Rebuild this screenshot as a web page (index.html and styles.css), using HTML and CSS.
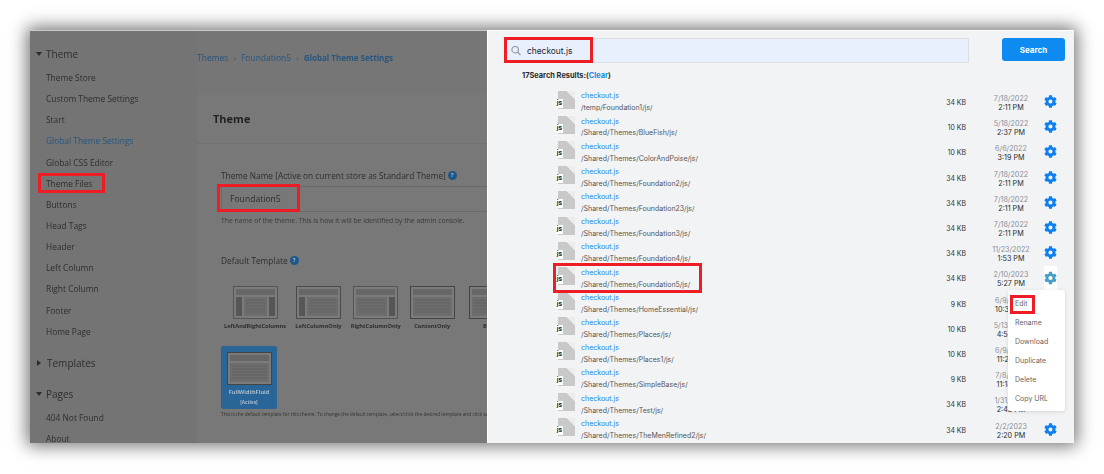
FILE: index.html
```html
<!DOCTYPE html>
<html lang="en">
<head>
  <meta charset="UTF-8">
  <title>Theme Files</title>
  <link rel="stylesheet" href="styles.css">
</head>
<body>
<svg class="icon-defs" width="0" height="0">
  <symbol id="gear" viewBox="0 0 512 512">
    <path d="M487.4 315.7l-42.6-24.6c4.3-23.2 4.3-47 0-70.2l42.6-24.6c4.9-2.8 7.1-8.6 5.5-14-11.1-35.6-30-67.8-54.7-94.6-3.8-4.1-10-5.1-14.8-2.3L380.8 110c-17.9-15.4-38.5-27.3-60.8-35.1V25.8c0-5.6-3.9-10.5-9.4-11.7-36.7-8.2-74.3-7.8-109.2 0-5.5 1.2-9.4 6.1-9.4 11.7V75c-22.2 7.9-42.8 19.8-60.8 35.1L88.7 85.5c-4.9-2.8-11-1.9-14.8 2.3-24.7 26.7-43.6 58.9-54.7 94.6-1.7 5.4.6 11.2 5.5 14L67.3 221c-4.3 23.2-4.3 47 0 70.2l-42.6 24.6c-4.9 2.8-7.1 8.6-5.5 14 11.1 35.6 30 67.8 54.7 94.6 3.8 4.1 10 5.1 14.8 2.3l42.6-24.6c17.9 15.4 38.5 27.3 60.8 35.1v49.2c0 5.6 3.9 10.5 9.4 11.7 36.7 8.2 74.3 7.8 109.2 0 5.5-1.2 9.4-6.1 9.4-11.7v-49.2c22.2-7.9 42.8-19.8 60.8-35.1l42.6 24.6c4.9 2.8 11 1.9 14.8-2.3 24.7-26.7 43.6-58.9 54.7-94.6 1.5-5.5-.7-11.3-5.6-14.1zM256 336c-44.1 0-80-35.9-80-80s35.9-80 80-80 80 35.9 80 80-35.9 80-80 80z"/>
  </symbol>
  <symbol id="tpl-both" viewBox="0 0 45 33">
    <rect x=".5" y=".5" width="44" height="32" fill="#7b7b7b" stroke="#555"/>
    <rect x="3" y="3" width="39" height="6" fill="#676767"/>
    <rect x="3" y="11" width="6" height="19" fill="#565656"/>
    <rect x="36" y="11" width="6" height="19" fill="#565656"/>
    <rect x="11" y="11" width="23" height="19" fill="#6d6d6d"/>
    <path d="M13 14h19M13 17h19M13 20h19M13 23h19M13 26h19" stroke="#636363"/>
  </symbol>
  <symbol id="tpl-left" viewBox="0 0 45 33">
    <rect x=".5" y=".5" width="44" height="32" fill="#7b7b7b" stroke="#4a4a4a"/>
    <rect x="3" y="3" width="39" height="6" fill="#676767"/>
    <rect x="3" y="11" width="6" height="19" fill="#565656"/>
    <rect x="11" y="11" width="31" height="19" fill="#6d6d6d"/>
    <path d="M13 14h27M13 17h27M13 20h27M13 23h27M13 26h27" stroke="#636363"/>
  </symbol>
  <symbol id="tpl-right" viewBox="0 0 45 33">
    <rect x=".5" y=".5" width="44" height="32" fill="#7b7b7b" stroke="#555"/>
    <rect x="3" y="3" width="39" height="6" fill="#676767"/>
    <rect x="36" y="11" width="6" height="19" fill="#565656"/>
    <rect x="3" y="11" width="31" height="19" fill="#6d6d6d"/>
    <path d="M5 14h27M5 17h27M5 20h27M5 23h27M5 26h27" stroke="#636363"/>
  </symbol>
  <symbol id="tpl-content" viewBox="0 0 45 33">
    <rect x=".5" y=".5" width="44" height="32" fill="#7b7b7b" stroke="#444"/>
    <rect x="3" y="3" width="39" height="6" fill="#676767"/>
    <rect x="3" y="11" width="39" height="19" fill="#6d6d6d"/>
    <path d="M5 14h35M5 17h35M5 20h35M5 23h35M5 26h35" stroke="#636363"/>
  </symbol>
</svg>

<div class="frame">
  <div class="admin-side">
    <nav class="side-nav">
      <div class="nav-head"><span class="caret-down"></span>Theme</div>
      <a class="nav-link">Theme Store</a>
      <a class="nav-link">Custom Theme Settings</a>
      <a class="nav-link">Start</a>
      <a class="nav-link nav-current">Global Theme Settings</a>
      <a class="nav-link">Global CSS Editor</a>
      <a class="nav-link">Theme Files</a>
      <a class="nav-link">Buttons</a>
      <a class="nav-link">Head Tags</a>
      <a class="nav-link">Header</a>
      <a class="nav-link">Left Column</a>
      <a class="nav-link">Right Column</a>
      <a class="nav-link">Footer</a>
      <a class="nav-link">Home Page</a>
      <div class="nav-head nav-head-gap"><span class="caret-right"></span>Templates</div>
      <div class="nav-head nav-head-gap2"><span class="caret-down"></span>Pages</div>
      <a class="nav-link">404 Not Found</a>
      <a class="nav-link">About</a>
    </nav>
    <main class="admin-main">
      <div class="crumbs">
        <span>Themes</span><span class="crumb-sep">›</span><span>Foundation5</span><span class="crumb-sep">›</span><b>Global Theme Settings</b>
      </div>
      <section class="card">
        <h2 class="card-title">Theme</h2>
        <div class="card-body">
          <label class="field-label">Theme Name [Active on current store as Standard Theme] <span class="help-dot">?</span></label>
          <div class="field-box">Foundation5</div>
          <p class="field-note">The name of the theme. This is how it will be identified by the admin console.</p>
          <label class="field-label tpl-label">Default Template <span class="help-dot">?</span></label>
          <div class="tpl-row">
            <div class="tpl"><svg class="tpl-pic"><use href="#tpl-both"/></svg><span>LeftAndRightColumns</span></div>
            <div class="tpl"><svg class="tpl-pic"><use href="#tpl-left"/></svg><span>LeftColumnOnly</span></div>
            <div class="tpl"><svg class="tpl-pic"><use href="#tpl-right"/></svg><span>RightColumnOnly</span></div>
            <div class="tpl"><svg class="tpl-pic"><use href="#tpl-content"/></svg><span>ContentOnly</span></div>
            <div class="tpl tpl-last"><svg class="tpl-pic"><use href="#tpl-content"/></svg><span>Blank</span></div>
          </div>
          <div class="tpl-active">
            <svg class="tpl-pic"><use href="#tpl-content"/></svg>
            <b>FullWidthFluid</b>
            <small>[Active]</small>
          </div>
          <p class="tpl-note">This is the default template for this theme. To change the default template, select/click the desired template and click save.</p>
        </div>
      </section>
    </main>
  </div>

  <div class="files-panel">
    <div class="search-row">
      <div class="search-box">
        <svg class="search-icon" viewBox="0 0 12 12"><circle cx="5" cy="5" r="3.9"/><path d="M8 8l3.4 3.4"/></svg>
        <span>checkout.js</span>
      </div>
      <button class="search-btn">Search</button>
    </div>
    <div class="result-count">17Search Results:(<a>Clear</a>)</div>

    <div class="file-list">
      <div class="file-row">
        <div class="file-icon"><span>js</span></div>
        <div class="file-name"><a>checkout.js</a><span>/temp/Foundation1/js/</span></div>
        <div class="file-size">34 KB</div>
        <div class="file-date">7/18/2022<b>2:11 PM</b></div>
        <svg class="gear"><use href="#gear"/></svg>
      </div>
      <div class="file-row">
        <div class="file-icon"><span>js</span></div>
        <div class="file-name"><a>checkout.js</a><span>/Shared/Themes/BlueFish/js/</span></div>
        <div class="file-size">10 KB</div>
        <div class="file-date">5/18/2022<b>2:37 PM</b></div>
        <svg class="gear"><use href="#gear"/></svg>
      </div>
      <div class="file-row">
        <div class="file-icon"><span>js</span></div>
        <div class="file-name"><a>checkout.js</a><span>/Shared/Themes/ColorAndPoise/js/</span></div>
        <div class="file-size">10 KB</div>
        <div class="file-date">6/6/2022<b>3:19 PM</b></div>
        <svg class="gear"><use href="#gear"/></svg>
      </div>
      <div class="file-row">
        <div class="file-icon"><span>js</span></div>
        <div class="file-name"><a>checkout.js</a><span>/Shared/Themes/Foundation2/js/</span></div>
        <div class="file-size">34 KB</div>
        <div class="file-date">7/18/2022<b>2:11 PM</b></div>
        <svg class="gear"><use href="#gear"/></svg>
      </div>
      <div class="file-row">
        <div class="file-icon"><span>js</span></div>
        <div class="file-name"><a>checkout.js</a><span>/Shared/Themes/Foundation23/js/</span></div>
        <div class="file-size">34 KB</div>
        <div class="file-date">7/18/2022<b>2:11 PM</b></div>
        <svg class="gear"><use href="#gear"/></svg>
      </div>
      <div class="file-row">
        <div class="file-icon"><span>js</span></div>
        <div class="file-name"><a>checkout.js</a><span>/Shared/Themes/Foundation3/js/</span></div>
        <div class="file-size">34 KB</div>
        <div class="file-date">7/18/2022<b>2:11 PM</b></div>
        <svg class="gear"><use href="#gear"/></svg>
      </div>
      <div class="file-row">
        <div class="file-icon"><span>js</span></div>
        <div class="file-name"><a>checkout.js</a><span>/Shared/Themes/Foundation4/js/</span></div>
        <div class="file-size">34 KB</div>
        <div class="file-date">11/23/2022<b>1:53 PM</b></div>
        <svg class="gear"><use href="#gear"/></svg>
      </div>
      <div class="file-row">
        <div class="file-icon"><span>js</span></div>
        <div class="file-name"><a>checkout.js</a><span>/Shared/Themes/Foundation5/js/</span></div>
        <div class="file-size">34 KB</div>
        <div class="file-date">2/10/2023<b>5:27 PM</b></div>
        <svg class="gear gear-open"><use href="#gear"/></svg>
      </div>
      <div class="file-row">
        <div class="file-icon"><span>js</span></div>
        <div class="file-name"><a>checkout.js</a><span>/Shared/Themes/HomeEssential/js/</span></div>
        <div class="file-size">9 KB</div>
        <div class="file-date">6/9/2022<b>10:33 AM</b></div>
        <svg class="gear"><use href="#gear"/></svg>
      </div>
      <div class="file-row">
        <div class="file-icon"><span>js</span></div>
        <div class="file-name"><a>checkout.js</a><span>/Shared/Themes/Places/js/</span></div>
        <div class="file-size">10 KB</div>
        <div class="file-date">5/13/2022<b>4:50 PM</b></div>
        <svg class="gear"><use href="#gear"/></svg>
      </div>
      <div class="file-row">
        <div class="file-icon"><span>js</span></div>
        <div class="file-name"><a>checkout.js</a><span>/Shared/Themes/Places1/js/</span></div>
        <div class="file-size">10 KB</div>
        <div class="file-date">6/9/2022<b>11:21 AM</b></div>
        <svg class="gear"><use href="#gear"/></svg>
      </div>
      <div class="file-row">
        <div class="file-icon"><span>js</span></div>
        <div class="file-name"><a>checkout.js</a><span>/Shared/Themes/SimpleBase/js/</span></div>
        <div class="file-size">9 KB</div>
        <div class="file-date">7/8/2022<b>11:14 AM</b></div>
        <svg class="gear"><use href="#gear"/></svg>
      </div>
      <div class="file-row">
        <div class="file-icon"><span>js</span></div>
        <div class="file-name"><a>checkout.js</a><span>/Shared/Themes/Test/js/</span></div>
        <div class="file-size">34 KB</div>
        <div class="file-date">1/31/2023<b>2:43 PM</b></div>
        <svg class="gear"><use href="#gear"/></svg>
      </div>
      <div class="file-row">
        <div class="file-icon"><span>js</span></div>
        <div class="file-name"><a>checkout.js</a><span>/Shared/Themes/TheMenRefined2/js/</span></div>
        <div class="file-size">34 KB</div>
        <div class="file-date">2/2/2023<b>2:20 PM</b></div>
        <svg class="gear"><use href="#gear"/></svg>
      </div>
    </div>

    <ul class="row-menu">
      <li>Edit</li>
      <li>Rename</li>
      <li>Download</li>
      <li>Duplicate</li>
      <li>Delete</li>
      <li>Copy URL</li>
    </ul>
  </div>

  <!-- red annotation boxes drawn on top of the screenshot -->
  <div class="mark mark-nav"></div>
  <div class="mark mark-field"></div>
  <div class="mark mark-search"></div>
  <div class="mark mark-row"></div>
  <div class="mark mark-edit"></div>
</div>
</body>
</html>
```

FILE: styles.css
```css
html, body {
  margin: 0;
  height: 100%;
  overflow: hidden;
  background: #fff;
}
body {
  padding: 30px 30px 31px 30px;
  box-sizing: border-box;
  font-family: 'Inter', 'Liberation Sans', sans-serif;
}
.icon-defs { position: absolute; }

.frame {
  position: relative;
  display: flex;
  height: 413px;
  box-shadow: 0 0 16px 3px rgba(0,0,0,.55);
}

/* dimmed admin page behind the panel */
.admin-side {
  width: 457px;
  flex: none;
  display: flex;
  overflow: hidden;
  background: #767676;
  border-top: 1px solid #c9c9c9;
  box-sizing: border-box;
  color: #2e2e2e;
  font-family: 'Open Sans', 'Liberation Sans', sans-serif;
  filter: blur(.4px);
}
.side-nav {
  width: 167px;
  flex: none;
  padding: 14px 0 0 6px;
  box-sizing: border-box;
  background: #747474;
}
.nav-head {
  display: flex;
  align-items: center;
  height: 17px;
  margin-bottom: 5px;
  font-size: 10px;
  color: #2e2e2e;
}
.nav-head-gap { margin-top: 13px; margin-bottom: 0; }
.nav-head-gap2 { margin-top: 14px; margin-bottom: 4px; }
.caret-down {
  width: 0; height: 0;
  margin-right: 4px;
  border: 3px solid transparent;
  border-top: 4px solid #2b2b2b;
  border-bottom: 0;
}
.caret-right {
  width: 0; height: 0;
  margin: 0 6px 0 1px;
  border: 3px solid transparent;
  border-left: 4px solid #2b2b2b;
  border-right: 0;
}
.nav-link {
  display: block;
  height: 21.15px;
  line-height: 21.15px;
  padding-left: 10px;
  font-size: 8.4px;
  color: #2e2e2e;
  white-space: nowrap;
}
.nav-current { color: #27567f; }

.admin-main {
  flex: 1;
  min-width: 0;
}
.crumbs {
  display: flex;
  align-items: center;
  gap: 5px;
  height: 52px;
  padding-bottom: 10px;
  font-size: 8.5px;
  color: #27567f;
  white-space: nowrap;
}
.crumb-sep { color: #555; }
.crumbs b { font-size: 8px; }

.card {
  height: 360px;
  background: #787878;
  border-radius: 3px 0 0 3px;
}
.card-title {
  margin: 0;
  padding: 18px 16px 0 16px;
  height: 32px;
  font-size: 11px;
  font-weight: 700;
  color: #222;
  border-bottom: 1px solid #717171;
}
.card-body {
  padding: 26px 0 0 24px;
}
.field-label {
  display: flex;
  align-items: center;
  gap: 2px;
  font-size: 8.3px;
  color: #2e2e2e;
  white-space: nowrap;
}
.help-dot {
  display: inline-block;
  width: 9px;
  height: 9px;
  border-radius: 50%;
  background: #1f5688;
  color: #9fb7cc;
  font-size: 6px;
  font-weight: 700;
  line-height: 9px;
  text-align: center;
}
.field-box {
  margin-top: 5px;
  height: 24px;
  line-height: 24px;
  padding-left: 8px;
  font-size: 8.6px;
  color: #2e2e2e;
  border: 1px solid #696969;
  border-right: 0;
}
.field-note {
  margin: 4px 0 0 0;
  font-size: 6.8px;
  color: #3a3a3a;
  white-space: nowrap;
}
.tpl-label { margin-top: 30px; }
.tpl-row {
  display: flex;
  gap: 9px;
  margin-top: 20px;
  padding-left: 3px;
}
.tpl {
  display: flex;
  flex-direction: column;
  align-items: center;
  flex: none;
  font-size: 5.7px;
  font-weight: 700;
  color: #2e2e2e;
  white-space: nowrap;
}
.tpl span { margin-top: 3px; }
.tpl-last { margin-left: 5px; }
.tpl-pic {
  display: block;
  width: 45px;
  height: 33px;
}
.tpl-active {
  display: flex;
  flex-direction: column;
  align-items: center;
  width: 56px;
  height: 63px;
  margin-top: 16px;
  padding-top: 6px;
  box-sizing: border-box;
  border-radius: 2px;
  background: #2a6598;
  color: #a9bccd;
  font-size: 5.6px;
}
.tpl-active b { margin-top: 3px; }
.tpl-active small { margin-top: 3px; font-size: 4.6px; font-weight: 700; }
.tpl-note {
  margin: 2px 0 0 0;
  font-size: 4.8px;
  color: #333;
  white-space: nowrap;
}

/* search panel */
.files-panel {
  position: relative;
  flex: 1;
  min-width: 0;
  overflow: hidden;
  background: #f2f3f5;
  border-left: 1px solid #fff;
  border-top: 1px solid #fff;
  box-sizing: border-box;
}
.search-row {
  display: flex;
  align-items: flex-start;
  padding: 7px 9px 0 16px;
}
.search-box {
  display: flex;
  align-items: center;
  gap: 6px;
  width: 465px;
  height: 25px;
  padding-left: 6px;
  box-sizing: border-box;
  background: #e8f0fe;
  border: 1px solid #dcdee2;
  font-size: 8.4px;
  color: #1c2430;
}
.search-icon {
  width: 10px;
  height: 11px;
  fill: none;
  stroke: #8f9399;
  stroke-width: 1.3;
}
.search-btn {
  width: 63px;
  height: 23px;
  margin-left: auto;
  border: none;
  border-radius: 3px;
  background: #0d8bf1;
  color: #fff;
  font-family: inherit;
  font-size: 8px;
  font-weight: 700;
}
.result-count {
  margin: 8px 0 0 34px;
  font-size: 7.4px;
  font-weight: 700;
  color: #2b2b2b;
  height: 9px;
  line-height: 9px;
}
.result-count a { color: #1d87e5; }

.file-list {
  margin-top: 7px;
  padding-left: 70px;
  padding-right: 17px;
}
.file-row {
  display: flex;
  align-items: center;
  height: 25.2px;
}
.file-icon {
  position: relative;
  width: 17px;
  height: 18px;
  flex: none;
  background: linear-gradient(to bottom left, #ececec 0 24%, #c9c9c9 25%);
}
.file-icon span {
  position: absolute;
  left: -2px;
  bottom: 1px;
  width: 7px;
  height: 9px;
  line-height: 9px;
  background: #fff;
  font-size: 6.5px;
  font-weight: 700;
  color: #222;
  text-align: center;
}
.file-name {
  display: flex;
  flex-direction: column;
  gap: 3.4px;
  width: 345px;
  margin-left: 6px;
  padding-top: 6px;
  flex: none;
  font-size: 7px;
  line-height: 8.6px;
  color: #555;
  white-space: nowrap;
}
.file-name a { color: #1d87e5; }
.file-size {
  width: 35px;
  margin-left: 5px;
  padding-top: 6px;
  flex: none;
  text-align: right;
  font-size: 6.9px;
  color: #333;
}
.file-date {
  width: 50px;
  margin-left: 20px;
  padding-top: 7px;
  flex: none;
  display: flex;
  flex-direction: column;
  align-items: center;
  font-size: 7.2px;
  color: #8a8f96;
  white-space: nowrap;
}
.file-date b { font-weight: 400; color: #2b2b2b; }
.gear {
  width: 13px;
  height: 13px;
  margin: 4px 0 0 8px;
  flex: none;
  fill: #0d7fee;
}
.gear-open {
  height: 24px;
  fill: #4aa0c4;
  background: #fff;
}

.row-menu {
  position: absolute;
  left: 520px;
  top: 259px;
  width: 57px;
  height: 121px;
  margin: 0;
  padding: 4px 0 0 0;
  box-sizing: border-box;
  list-style: none;
  background: #fff;
  border-radius: 3px;
  box-shadow: 0 1px 4px rgba(0,0,0,.12);
}
.row-menu li {
  height: 19px;
  line-height: 19px;
  padding-left: 7px;
  font-size: 7px;
  color: #666;
  white-space: nowrap;
}

/* annotations */
.mark {
  position: absolute;
  box-sizing: border-box;
  border: 3px solid #ee1c25;
}
.mark-nav { left: 8px; top: 143px; width: 67px; height: 20px; }
.mark-field { left: 187px; top: 154px; width: 83px; height: 28px; }
.mark-search { left: 474px; top: 7px; width: 89px; height: 26px; }
.mark-row { left: 523px; top: 233px; width: 149px; height: 30px; }
.mark-edit { left: 980px; top: 265px; width: 25px; height: 19px; }
```
